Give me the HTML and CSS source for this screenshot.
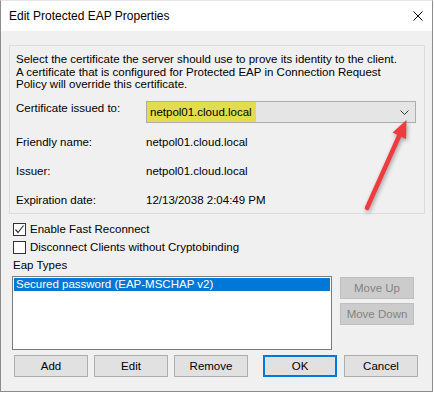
FILE: index.html
```html
<!DOCTYPE html>
<html lang="en">
<head>
    <meta charset="UTF-8">
    <title>Edit Protected EAP Properties</title>
    <link rel="stylesheet" href="styles.css">
</head>
<body>
    <div class="window">
        <div class="titlebar">
            <span class="title">Edit Protected EAP Properties</span>
            <svg class="close" width="10" height="10" viewBox="0 0 10 10">
                <path d="M0.5 0.5 L9.5 9.5 M9.5 0.5 L0.5 9.5" stroke="#000" stroke-width="1" fill="none"/>
            </svg>
        </div>
        <div class="content">
            <div class="group">
                <p class="desc">Select the certificate the server should use to prove its identity to the client.<br>A certificate that is configured for Protected EAP in Connection Request<br>Policy will override this certificate.</p>
                <div class="row cert-row">
                    <span class="label">Certificate issued to:</span>
                    <div class="combo">
                        <span class="combo-value">netpol01.cloud.local</span>
                        <svg class="chevron" width="9" height="5" viewBox="0 0 9 5">
                            <path d="M0.5 0.5 L4.5 4.5 L8.5 0.5" stroke="#333" stroke-width="1" fill="none"/>
                        </svg>
                    </div>
                </div>
                <div class="row">
                    <span class="label">Friendly name:</span>
                    <span class="value">netpol01.cloud.local</span>
                </div>
                <div class="row">
                    <span class="label">Issuer:</span>
                    <span class="value">netpol01.cloud.local</span>
                </div>
                <div class="row">
                    <span class="label">Expiration date:</span>
                    <span class="value">12/13/2038 2:04:49 PM</span>
                </div>
            </div>

            <div class="check first-check">
                <span class="box">
                    <svg width="11" height="11" viewBox="0 0 11 11">
                        <path d="M1.5 5.5 L4 8.5 L9.5 1.5" stroke="#333" stroke-width="1.2" fill="none"/>
                    </svg>
                </span>
                <span>Enable Fast Reconnect</span>
            </div>
            <div class="check">
                <span class="box"></span>
                <span>Disconnect Clients without Cryptobinding</span>
            </div>
            <div class="eap-label">Eap Types</div>

            <div class="eap-area">
                <div class="listbox">
                    <div class="item selected">Secured password (EAP-MSCHAP v2)</div>
                </div>
                <div class="side-buttons">
                    <button class="btn disabled">Move Up</button>
                    <button class="btn disabled">Move Down</button>
                </div>
            </div>

            <div class="bottom-buttons">
                <button class="btn">Add</button>
                <button class="btn">Edit</button>
                <button class="btn">Remove</button>
                <button class="btn default">OK</button>
                <button class="btn">Cancel</button>
            </div>
        </div>

        <svg class="arrow" width="60" height="110" viewBox="350 110 60 110">
            <line x1="367" y1="208" x2="400" y2="134" stroke="#ef3a3e" stroke-width="4.5" stroke-linecap="round"/>
            <polygon points="406.5,120 406,139 392.5,132.5" fill="#ef3a3e"/>
        </svg>
    </div>
</body>
</html>
```

FILE: styles.css
```css
* {
    box-sizing: border-box;
    margin: 0;
    padding: 0;
}
body {
    background-color: #ffffff;
    font-family: 'Liberation Sans', Arial, sans-serif;
    font-size: 11.5px;
    color: #000;
}
.window {
    position: relative;
    width: 433px;
    height: 392px;
    background-color: #f0f0f0;
    border: 1px solid #8c8c8c;
    border-top-color: #e6e6e6;
}
.titlebar {
    height: 30px;
    background-color: #fff;
    display: flex;
    align-items: center;
    justify-content: space-between;
    padding: 0 9px 0 8px;
}
.title {
    font-size: 12px;
}
.content {
    padding: 14px 8px 0 8px;
}
.group {
    width: 416px;
    height: 169px;
    border: 1px solid #dcdcdc;
    padding: 7px 6px 0 6px;
}
.desc {
    line-height: 12.5px;
    height: 37px;
}
.row {
    display: flex;
    align-items: center;
    height: 29px;
}
.cert-row {
    align-items: flex-start;
    height: 24px;
    margin-top: 11px;
    margin-bottom: 2px;
}
.cert-row .label {
    padding-top: 1px;
    line-height: 12px;
}
.label {
    width: 130px;
    flex-shrink: 0;
}
.combo {
    width: 270px;
    height: 22px;
    background-color: #e5e5e5;
    border: 1px solid #adadad;
    display: flex;
    align-items: center;
    justify-content: space-between;
    padding-right: 6px;
}
.combo-value {
    background-color: #e2dd4c;
    height: 20px;
    line-height: 20px;
    width: 109px;
    padding-left: 3px;
}
.check {
    display: flex;
    align-items: center;
    height: 18px;
    padding-left: 4px;
}
.first-check {
    margin-top: 6px;
}
.box {
    width: 13px;
    height: 13px;
    border: 1px solid #333;
    background-color: #fff;
    margin-right: 4px;
    display: flex;
    align-items: center;
    justify-content: center;
}
.eap-label {
    padding-left: 4px;
    height: 18px;
    line-height: 18px;
}
.eap-area {
    display: flex;
    gap: 8px;
    margin-top: 2px;
    padding-left: 3px;
}
.listbox {
    width: 320px;
    height: 74px;
    background-color: #fff;
    border: 1px solid #7a7a7a;
    padding: 1px;
}
.item {
    height: 13px;
    line-height: 13px;
    padding-left: 2px;
}
.selected {
    background-color: #0078d7;
    color: #fff;
}
.side-buttons {
    display: flex;
    flex-direction: column;
    gap: 4px;
    padding-top: 1px;
}
.btn {
    width: 74px;
    height: 22px;
    font-family: 'Liberation Sans', Arial, sans-serif;
    font-size: 11.5px;
    background-color: #e1e1e1;
    border: 1px solid #adadad;
    color: #000;
}
.disabled {
    background-color: #cccccc;
    border-color: #bfbfbf;
    color: #838383;
}
.bottom-buttons {
    display: flex;
    gap: 6px;
    margin-top: 5px;
    padding-left: 5px;
}
.default {
    border: 2px solid #0078d7;
    margin-left: 9px;
}
.default + .btn {
    margin-left: 1px;
}
.arrow {
    position: absolute;
    left: 349px;
    top: 109px;
    filter: drop-shadow(1px 2px 2px rgba(0, 0, 0, 0.35));
}
```
